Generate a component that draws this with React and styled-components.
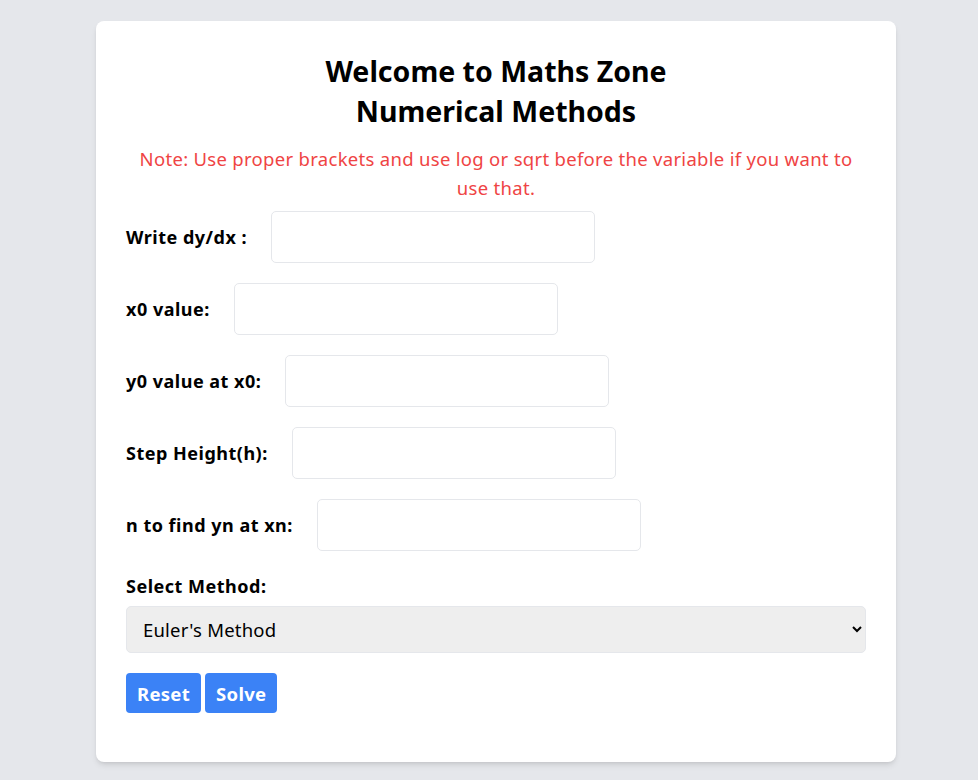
import styled, { createGlobalStyle } from 'styled-components';

const GlobalStyle = createGlobalStyle`
    body {
        margin: 0;
        background-color: #e5e7eb;
        font-family: 'Noto Sans', 'Open Sans', sans-serif;
    }
`;

const Page = styled.div`
    padding: 21px 0 18px 96px;
`;

const Card = styled.div`
    width: 800px;
    box-sizing: border-box;
    padding: 30px 30px 49px;
    background-color: #fff;
    border-radius: 8px;
    box-shadow: 0 4px 6px -1px rgba(0, 0, 0, 0.1), 0 2px 4px -2px rgba(0, 0, 0, 0.1);
`;

const Title = styled.h1`
    margin: 0 0 13px;
    text-align: center;
    font-size: 28.5px;
    line-height: 40px;
    font-weight: 700;
    color: #000;
`;

const Note = styled.p`
    margin: 0 0 9px;
    text-align: center;
    font-size: 18.5px;
    letter-spacing: 0.3px;
    line-height: 29px;
    color: #ef4444;
`;

const Row = styled.div`
    display: flex;
    align-items: center;
    gap: 24px;
    margin-bottom: 20px;
`;

const Label = styled.label`
    font-size: 18px;
    letter-spacing: 0.5px;
    font-weight: 700;
    color: #000;
`;

const Input = styled.input`
    width: 324px;
    height: 52px;
    box-sizing: border-box;
    border: 1px solid #e5e7eb;
    border-radius: 5px;
    padding: 0 12px;
    font-family: inherit;
    font-size: 17px;
    outline: none;
`;

const MethodLabel = styled(Label)`
    display: block;
    line-height: 24px;
    margin: 23px 0 8px;
`;

const Select = styled.select`
    width: 100%;
    height: 47px;
    box-sizing: border-box;
    padding: 0 12px;
    border: 1px solid #e5e7eb;
    border-radius: 5px;
    background-color: #eeeeee;
    font-family: inherit;
    font-size: 18.5px;
    letter-spacing: 0.2px;
    color: #000;
`;

const Buttons = styled.div`
    display: flex;
    gap: 4px;
    margin-top: 20px;
`;

const Button = styled.button`
    height: 40px;
    padding: 0 11px;
    border: none;
    border-radius: 4px;
    background-color: #3b82f6;
    color: #fff;
    font-family: inherit;
    font-size: 18.5px;
    letter-spacing: 0.3px;
    font-weight: 700;
    cursor: pointer;
`;

const fields = [
    'Write dy/dx :',
    'x0 value:',
    'y0 value at x0:',
    'Step Height(h):',
    'n to find yn at xn:',
];

export default function App() {
    return (
        <Page>
            <GlobalStyle />
            <Card>
                <Title>
                    Welcome to Maths Zone
                    <br />
                    Numerical Methods
                </Title>
                <Note>
                    Note: Use proper brackets and use log or sqrt before the variable if you want to use that.
                </Note>
                {fields.map((f) => (
                    <Row key={f}>
                        <Label>{f}</Label>
                        <Input type="text" />
                    </Row>
                ))}
                <MethodLabel>Select Method:</MethodLabel>
                <Select defaultValue="euler">
                    <option value="euler">Euler's Method</option>
                    <option value="modified">Modified Euler's Method</option>
                    <option value="rk">Runge-Kutta Method</option>
                </Select>
                <Buttons>
                    <Button type="button">Reset</Button>
                    <Button type="button">Solve</Button>
                </Buttons>
            </Card>
        </Page>
    );
}
